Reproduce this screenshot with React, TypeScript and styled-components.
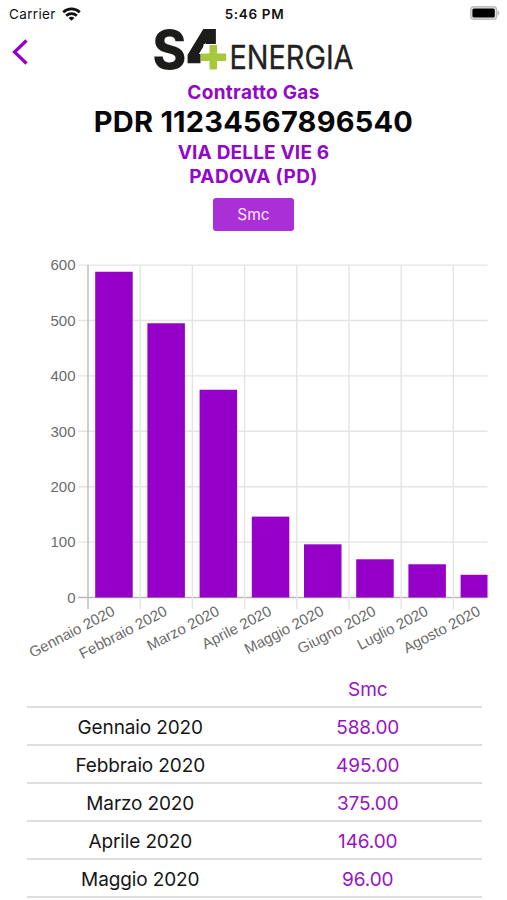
import React from 'react';
import styled, { createGlobalStyle } from 'styled-components';

const GlobalStyle = createGlobalStyle`
  * { box-sizing: border-box; }
  body { margin: 0; background: #fff; overflow: hidden; }
`;

const Screen = styled.div`
  width: 507px;
  height: 900px;
  overflow: hidden;
  display: flex;
  flex-direction: column;
  background: #fff;
  color: #111;
  font-family: Inter, 'Liberation Sans', sans-serif;
`;

const StatusBar = styled.header`
  height: 28px;
  flex: none;
  display: grid;
  grid-template-columns: 1fr auto 1fr;
  align-items: center;
  padding: 0 7px 2px 9px;
  font-size: 13.5px;
`;

const Carrier = styled.div`
  display: flex;
  align-items: center;
  gap: 6px;
  letter-spacing: 0.35px;
  padding-top: 1px;
`;

const Clock = styled.div`
  font-weight: 600;
  font-size: 13.5px;
  letter-spacing: 0.65px;
  padding-top: 2px;
`;

const BatterySlot = styled.div`
  display: flex;
  justify-content: flex-end;
`;

const NavBar = styled.nav`
  height: 50px;
  flex: none;
  display: grid;
  grid-template-columns: 154px 200px 1fr;
  align-items: start;
`;

const BackButton = styled.button`
  border: 0;
  background: none;
  padding: 10px 0 0 11px;
  width: 44px;
  display: flex;
`;

const Brand = styled.svg`
  overflow: visible;
  font-family: Inter, sans-serif;
`;

const Contract = styled.section`
  flex: none;
  display: flex;
  flex-direction: column;
  align-items: center;
  padding-top: 2px;
`;

const Heading = styled.p<{ $spacing: number }>`
  margin: 0;
  padding-top: 1px;
  font-weight: 700;
  font-size: 19px;
  line-height: 23px;
  letter-spacing: ${(p) => p.$spacing}px;
  color: #9108c6;
  white-space: nowrap;
`;

const PointCode = styled.h1`
  margin: 0;
  font-size: 29px;
  line-height: 36px;
  font-weight: 700;
  letter-spacing: 0.22px;
  color: #080808;
  white-space: nowrap;
`;

const UnitButton = styled.button`
  margin-top: 10px;
  width: 81px;
  height: 33px;
  border: 0;
  border-radius: 3px;
  background: #ab2fd7;
  color: #fbe9ff;
  font: 400 15.5px Inter, sans-serif;
`;

const ChartArea = styled.section`
  flex: none;
  height: 438px;
`;

const Table = styled.table`
  width: 455px;
  margin-left: 26.5px;
  table-layout: fixed;
  border-collapse: collapse;
  font-size: 19px;
  letter-spacing: -0.12px;
`;

const HeaderCell = styled.th`
  height: 38px;
  padding: 4px 0 0;
  font-weight: 400;
  color: #9913c4;
  border-bottom: 2px solid #dedede;
`;

const Cell = styled.td<{ $value?: boolean }>`
  height: 38px;
  padding: 3px 0 0;
  text-align: center;
  border-bottom: 2px solid #dedede;
  color: ${(p) => (p.$value ? '#9913c4' : '#161616')};
`;

const readings = [
  { month: 'Gennaio 2020', value: 588 },
  { month: 'Febbraio 2020', value: 495 },
  { month: 'Marzo 2020', value: 375 },
  { month: 'Aprile 2020', value: 146 },
  { month: 'Maggio 2020', value: 96 },
  { month: 'Giugno 2020', value: 69 },
  { month: 'Luglio 2020', value: 60 },
  { month: 'Agosto 2020', value: 41 },
];

function WifiIcon() {
  return (
    <svg width="19" height="14" viewBox="0 0 19 14" fill="none" stroke="#111" strokeWidth="2.7">
      <path d="M1.200 5.200a12.200 12.200 0 0 1 16.600 0" />
      <path d="M4.200 8.700a7.800 7.800 0 0 1 10.600 0" />
      <path d="M9.500 13.800 6.600 11a4 4 0 0 1 5.800 0z" fill="#111" stroke="none" />
    </svg>
  );
}

function BatteryIcon() {
  return (
    <svg width="30" height="14" viewBox="0 0 30 14">
      <rect x="0.7" y="0.7" width="26" height="12.6" rx="3.4" fill="#e4e4e4" stroke="#bdbdbd" strokeWidth="1.4" />
      <rect x="2.4" y="2.4" width="22.4" height="9.2" rx="1.6" fill="#000" />
      <path d="M27.500 4.500c2.600.8 2.600 4.200 0 5z" fill="#bdbdbd" />
    </svg>
  );
}

function Logo() {
  return (
    <Brand width="200" height="48" viewBox="154 28 200 48" role="img" aria-label="S4 Energia">
      <text x="152.5" y="68.500" fontWeight="800" fontSize="53" fill="#1c1c1b" textLength="69" lengthAdjust="spacingAndGlyphs">
        S<tspan stroke="#1c1c1b" strokeWidth="2">4</tspan>
      </text>
      <path d="M203.500 44H224v27h-23.500V52h3z" fill="#fff" />
      <path d="M209.500 45h7.500v8.500h9.200v7.500H217v8.500h-7.500V61H201v-7.500h8.500z" fill="#a7c83d" />
      <text x="229.500" y="69" fontWeight="400" fontSize="32.500" fill="#222" stroke="#222" strokeWidth="0.3" textLength="124" lengthAdjust="spacingAndGlyphs">ENERGIA</text>
    </Brand>
  );
}

function UsageChart() {
  const left = 88;
  const right = 487.5;
  const base = 366.5;
  const step = 55.4;
  const column = 52.2;
  return (
    <svg width="507" height="438" viewBox="0 0 507 438" fontFamily="'Liberation Sans', Arial, sans-serif" fontSize="15" fill="#6b6b6b">
      {[0, 1, 2, 3, 4, 5, 6].map((n) => (
        <g key={n}>
          <path d={`M78 ${base - n * step}H${right}`} stroke={n ? '#e4e4e4' : '#b9b9b9'} strokeWidth="1.4" />
          <text x="75.500" y={base - n * step + 5.300} textAnchor="end">{n * 100}</text>
        </g>
      ))}
      {readings.map((r, i) => {
        const x = left + i * column;
        const height = (r.value / 100) * step;
        return (
          <g key={r.month}>
            <path d={`M${x} ${base - 6 * step}V378`} stroke={i ? '#e4e4e4' : '#b9b9b9'} strokeWidth="1.4" />
            <rect x={x + 7.200} y={base - height} width={Math.min(37.500, right - x - 7.200)} height={height} fill="#9500c8" />
            <text transform={`translate(${x + 28} 383.500) rotate(-27.500)`} textAnchor="end">{r.month}</text>
          </g>
        );
      })}
    </svg>
  );
}

export default function App() {
  return (
    <Screen>
      <GlobalStyle />
      <StatusBar>
        <Carrier>Carrier <WifiIcon /></Carrier>
        <Clock>5:46 PM</Clock>
        <BatterySlot><BatteryIcon /></BatterySlot>
      </StatusBar>
      <NavBar>
        <BackButton aria-label="Indietro">
          <svg width="18" height="28" viewBox="0 0 18 28" fill="none" stroke="#9500c8" strokeWidth="3.200">
            <path d="M15.500 2.500 3.500 14l12 11.500" />
          </svg>
        </BackButton>
        <Logo />
      </NavBar>
      <Contract>
        <Heading $spacing={0.32}>Contratto Gas</Heading>
        <PointCode>PDR 11234567896540</PointCode>
        <Heading $spacing={0.18}>VIA DELLE VIE 6</Heading>
        <Heading $spacing={0.35}>PADOVA (PD)</Heading>
        <UnitButton>Smc</UnitButton>
      </Contract>
      <ChartArea><UsageChart /></ChartArea>
      <Table>
        <thead>
          <tr><HeaderCell /><HeaderCell>Smc</HeaderCell></tr>
        </thead>
        <tbody>
          {readings.slice(0, 5).map((r) => (
            <tr key={r.month}>
              <Cell>{r.month}</Cell>
              <Cell $value>{r.value.toFixed(2)}</Cell>
            </tr>
          ))}
        </tbody>
      </Table>
    </Screen>
  );
}
